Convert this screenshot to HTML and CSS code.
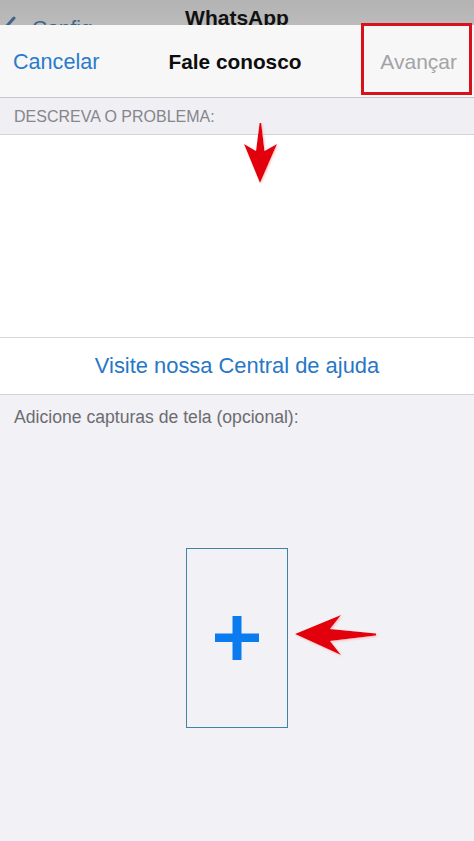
FILE: index.html
```html
<!DOCTYPE html>
<html lang="pt">
<head>
<meta charset="utf-8">
<title>Fale conosco</title>
<link rel="stylesheet" href="styles.css">
</head>
<body>
<div class="page">
  <div class="backdrop">
    <div class="backdrop-row">
      <div class="back">
        <svg class="chev" width="14" height="24" viewBox="0 0 14 24"><path d="M12 2 L3 12 L12 22" fill="none" stroke="#43638a" stroke-width="3" stroke-linecap="round" stroke-linejoin="round"/></svg>
        <span class="back-label">Config</span>
      </div>
      <div class="backdrop-title">WhatsApp</div>
      <div></div>
    </div>
  </div>
  <div class="sheet">
    <div class="nav">
      <span class="nav-left">Cancelar</span>
      <span class="nav-title">Fale conosco</span>
      <span class="nav-right">Avançar</span>
      <div class="highlight"></div>
    </div>
    <div class="section-label">DESCREVA O PROBLEMA:</div>
    <div class="textarea"></div>
    <div class="link-row">Visite nossa Central de ajuda</div>
    <div class="screens">
      <div class="screens-label">Adicione capturas de tela (opcional):</div>
      <div class="add-box">
        <svg width="46" height="46" viewBox="0 0 46 46"><rect x="18.5" y="1" width="9" height="44" fill="#0b7cf0"/><rect x="1" y="18.5" width="44" height="8.5" fill="#0b7cf0"/></svg>
      </div>
    </div>
  </div>
  <svg class="annotations" width="474" height="841" viewBox="0 0 474 841">
    <defs>
      <filter id="soft" x="-30%" y="-30%" width="160%" height="160%">
        <feGaussianBlur in="SourceAlpha" stdDeviation="1.2"/>
        <feOffset dx="0.5" dy="1" result="b"/>
        <feFlood flood-color="#ff9a9a" flood-opacity="0.6"/>
        <feComposite in2="b" operator="in"/>
        <feMerge><feMergeNode/><feMergeNode in="SourceGraphic"/></feMerge>
      </filter>
    </defs>
    <polygon filter="url(#soft)" fill="#e2000c" points="260,183 277,144 264.5,151 261.2,123 259.6,123 256,151 244,144"/>
    <polygon filter="url(#soft)" fill="#e2000c" points="295,634 341,615 330,629 376,633.5 376,635.5 330,641 341,655"/>
  </svg>
</div>
</body>
</html>
```
FILE: styles.css
```css
* { box-sizing: border-box; }
html, body { margin: 0; padding: 0; }
body {
  font-family: "Liberation Sans", Arial, Helvetica, sans-serif;
  background: #f1f1f6;
}
.page {
  position: relative;
  width: 474px;
  height: 841px;
  overflow: hidden;
  background: #f1f1f6;
}
.backdrop {
  height: 25px;
  overflow: hidden;
  background: linear-gradient(#b3b3b3, #bbbbbb);
}
.backdrop-row {
  display: grid;
  grid-template-columns: 1fr auto 1fr;
  align-items: start;
}
.back {
  display: flex;
  align-items: flex-start;
  gap: 16px;
  padding-top: 16px;
  padding-left: 2px;
}
.chev { flex: none; }
.back-label {
  font-size: 21px;
  line-height: 24px;
  color: #43638a;
  margin-top: 0;
}
.backdrop-title {
  font-size: 21px;
  font-weight: bold;
  line-height: 21px;
  padding-top: 7px;
  color: #111;
}
.sheet {
  background: #f7f7f7;
}
.nav {
  position: relative;
  height: 73px;
  display: grid;
  grid-template-columns: 1fr auto 1fr;
  align-items: center;
  padding: 1px 17px 0 13px;
  border-bottom: 1px solid #c8c7cc;
  background: #f7f7f7;
  font-size: 21px;
}
.nav-left { color: #2a7bcc; justify-self: start; font-size: 21.6px; }
.nav-title { font-weight: bold; color: #0d0d0d; font-size: 20.8px; }
.nav-right { color: #a3a3a6; justify-self: end; }
.highlight {
  position: absolute;
  left: 361px;
  top: -2px;
  width: 111px;
  height: 72px;
  border: 3px solid #d7121b;
}
.section-label {
  height: 37px;
  display: flex;
  align-items: center;
  padding-left: 14px;
  padding-top: 1px;
  background: #efeff4;
  color: #86868b;
  font-size: 16px;
  border-bottom: 1px solid #d4d4d8;
}
.textarea {
  height: 203px;
  background: #fff;
  border-bottom: 1px solid #d8d8dc;
}
.link-row {
  height: 57px;
  display: flex;
  align-items: center;
  justify-content: center;
  background: #fff;
  color: #2777c6;
  font-size: 21.9px;
  border-bottom: 1px solid #d4d4d8;
}
.screens {
  background: #f1f1f6;
  padding-top: 11px;
  height: 446px;
}
.screens-label {
  padding-left: 14px;
  font-size: 17.6px;
  line-height: 22px;
  color: #6c6c70;
}
.add-box {
  margin: 120px auto 0;
  width: 102px;
  height: 180px;
  border: 1.5px solid #3f84a2;
  display: flex;
  align-items: center;
  justify-content: center;
}
.annotations {
  position: absolute;
  left: 0;
  top: 0;
  pointer-events: none;
}
```
